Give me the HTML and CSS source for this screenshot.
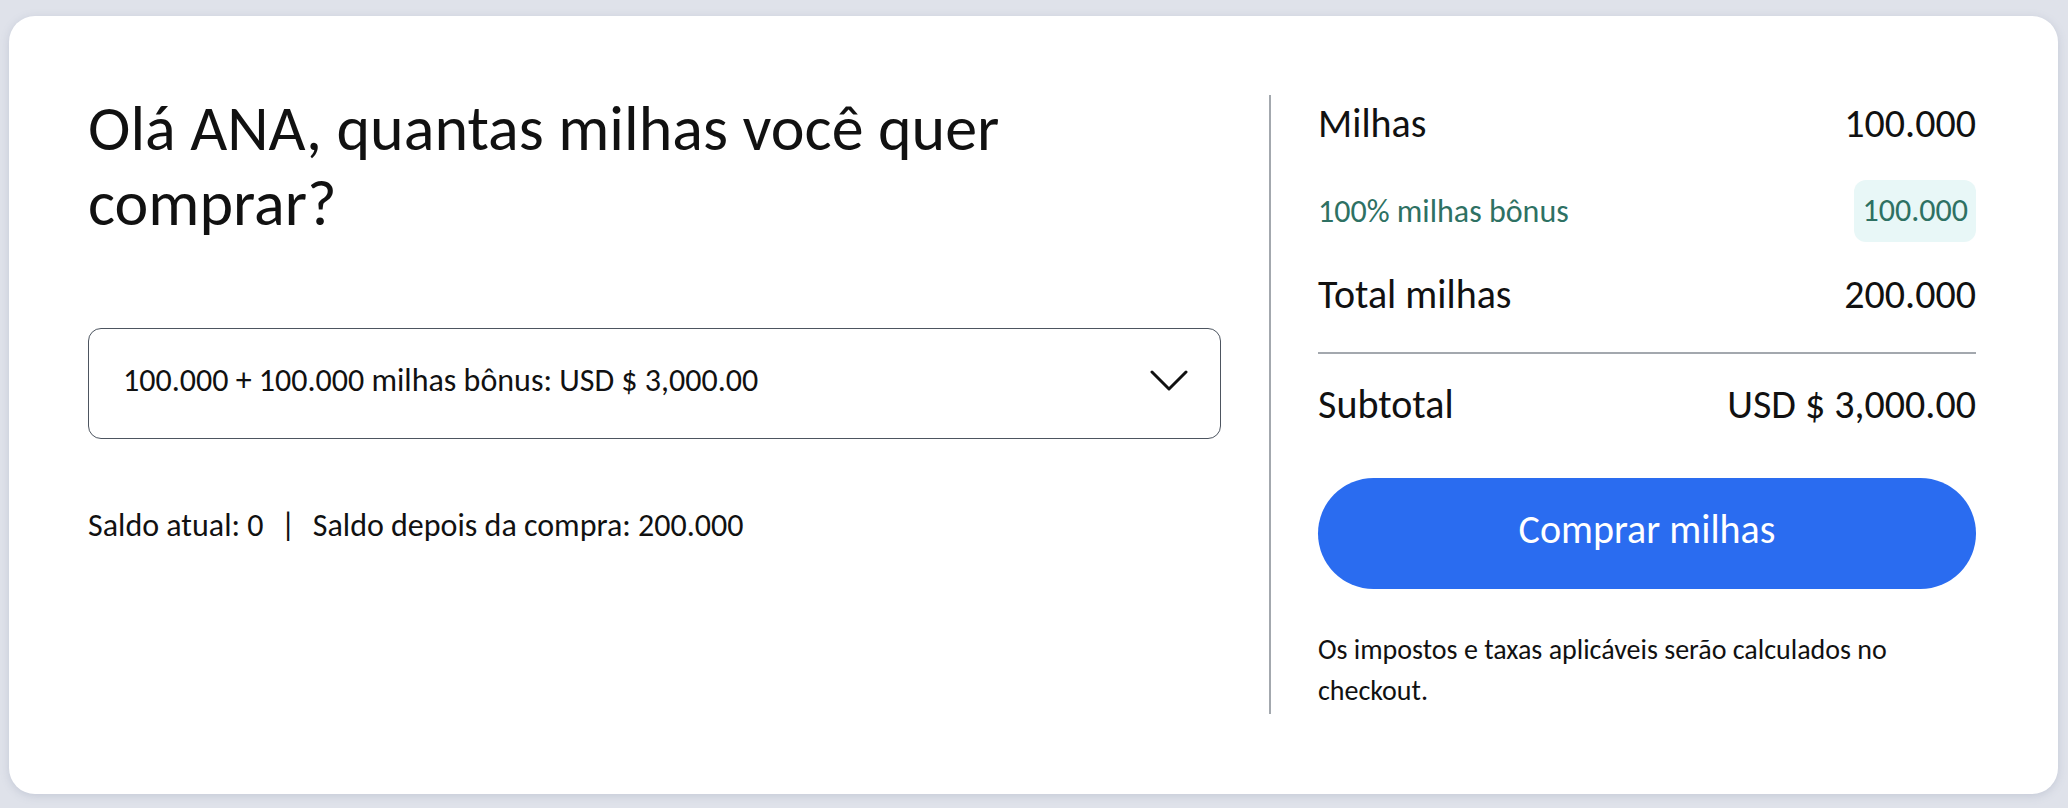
FILE: index.html
```html
<!DOCTYPE html>
<html lang="pt-BR">
<head>
<meta charset="utf-8">
<title>Comprar milhas</title>
<link rel="stylesheet" href="styles.css">
</head>
<body>
<div class="page">
  <main class="card">
    <section class="left">
      <h1 class="title">Olá ANA, quantas milhas você quer comprar?</h1>
      <div class="select">
        <span class="select-text">100.000 + 100.000 milhas bônus: USD $ 3,000.00</span>
        <svg class="chevron" width="38" height="22" viewBox="0 0 38 22"><polyline points="2,2 19,19 36,2" fill="none" stroke="#111" stroke-width="3" stroke-linecap="round" stroke-linejoin="round"/></svg>
      </div>
      <p class="balance">Saldo atual: 0 <span class="sep">|</span> Saldo depois da compra: 200.000</p>
    </section>
    <aside class="summary">
      <div class="row row-lg"><span>Milhas</span><span>100.000</span></div>
      <div class="row row-bonus"><span>100% milhas bônus</span><span class="pill">100.000</span></div>
      <div class="row row-lg"><span>Total milhas</span><span>200.000</span></div>
      <hr class="rule">
      <div class="row row-lg row-sub"><span>Subtotal</span><span>USD $ 3,000.00</span></div>
      <button class="buy" type="button">Comprar milhas</button>
      <p class="note">Os impostos e taxas aplicáveis serão calculados no checkout.</p>
    </aside>
  </main>
</div>
</body>
</html>
```
FILE: styles.css
```css
* { box-sizing: border-box; }
html, body { margin: 0; padding: 0; }
body {
  background: #dfe2ea;
  font-family: Carlito, "Open Sans", "Noto Sans", sans-serif;
  color: #111;
}
.page {
  padding: 16px 10px 14px 9px;
}
.card {
  background: #fff;
  border-radius: 26px;
  box-shadow: 0 2px 8px rgba(120, 130, 160, 0.25);
  padding: 79px 82px 80px 79px;
  display: flex;
  min-height: 778px;
}
.left {
  flex: 1;
  padding-right: 48px;
}
.title {
  margin: -4px 0 0;
  font-size: 64px;
  font-weight: 400;
  line-height: 75px;
  max-width: 1000px;
}
.select {
  margin-top: 87px;
  height: 111px;
  border: 1.5px solid #4d5560;
  border-radius: 13px;
  display: flex;
  align-items: center;
  justify-content: space-between;
  padding: 0 32px 6px 34px;
}
.select-text {
  font-size: 32px;
}
.chevron { display: block; }
.balance {
  margin: 67px 0 0;
  font-size: 32px;
  line-height: 40px;
}
.sep { margin: 0 10px; }
.summary {
  width: 707px;
  border-left: 2px solid #a3a8ae;
  padding-left: 47px;
  display: flex;
  flex-direction: column;
}
.row {
  display: flex;
  justify-content: space-between;
  align-items: center;
}
.row-lg {
  font-size: 40px;
  line-height: 58px;
}
.row-bonus {
  margin-top: 27px;
  margin-bottom: 24px;
  font-size: 32px;
  color: #2e7163;
}
.pill {
  background: #e8f7f7;
  border-radius: 12px;
  padding: 11px 8px 11px 9px;
  line-height: 40px;
}
.rule {
  margin: 28px 0 22px;
  border: 0;
  border-top: 2px solid #a3a8ae;
  height: 0;
}
.buy {
  margin-top: 44px;
  height: 111px;
  border: 0;
  border-radius: 56px;
  background: #2a6cf0;
  color: #fff;
  font-family: inherit;
  font-size: 40px;
  padding: 0 0 8px;
  cursor: pointer;
}
.note {
  margin: 40px 0 0;
  font-size: 28px;
  line-height: 41px;
}
```
